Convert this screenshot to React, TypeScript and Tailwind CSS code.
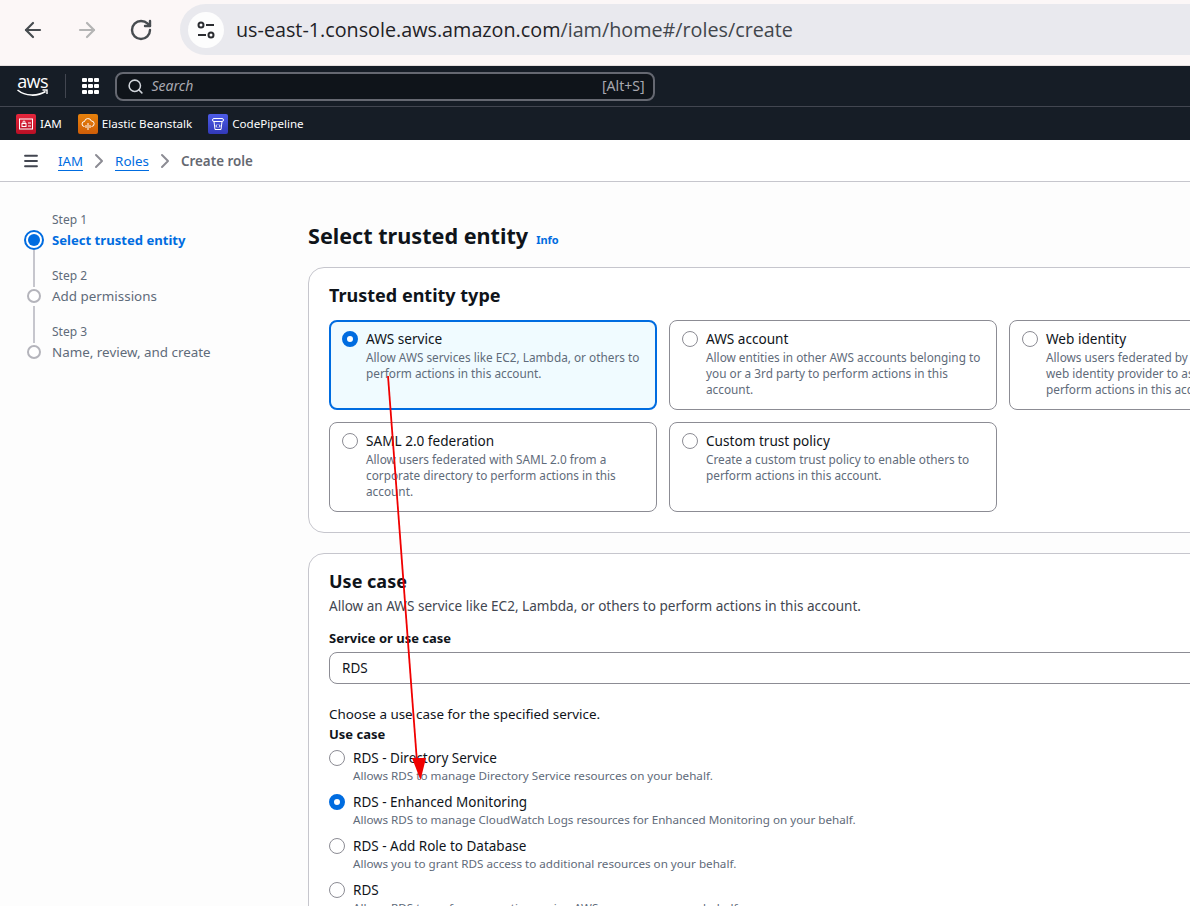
import React from 'react';
import { ArrowLeft, ArrowRight, RotateCw, Search, ChevronRight, Menu } from 'lucide-react';

const FONT = "font-['Noto_Sans','Open_Sans',sans-serif]";

const Radio: React.FC<{ checked?: boolean }> = ({ checked }) =>
  checked ? (
    <span className="block w-4 h-4 rounded-full border-[5px] border-[#006ce0] bg-white shrink-0" />
  ) : (
    <span className="block w-4 h-4 rounded-full border-[1.5px] border-[#8c8c94] bg-white shrink-0" />
  );

const Tile: React.FC<{ title: string; lines: string[]; checked?: boolean }> = ({ title, lines, checked }) => (
  <div
    className={
      checked
        ? 'w-[328px] h-[90px] rounded-lg border-2 border-[#006ce0] bg-[#f0fbff] pl-[11px] pt-[8px] flex gap-2'
        : 'w-[328px] h-[90px] rounded-lg border border-[#8c8c94] bg-white pl-[12px] pt-[9px] flex gap-2'
    }
  >
    <div className="pt-px">
      <Radio checked={checked} />
    </div>
    <div>
      <div className="text-[13.6px] leading-[18px] text-[#0f141a]">{title}</div>
      <div className="mt-px text-[11.8px] leading-4 text-[#5f6b7a] whitespace-nowrap">
        {lines.map(line => (
          <div key={line}>{line}</div>
        ))}
      </div>
    </div>
  </div>
);

const Step: React.FC<{ step: string; label: string; active?: boolean; line?: boolean }> = ({ step, label, active, line }) => (
  <div className="relative h-[56px] pl-[52px]">
    <div className="text-xs leading-4 text-[#5f6b7a] pt-[3px]">{step}</div>
    <div className={active ? 'text-[13.1px] leading-5 mt-[2px] font-bold text-[#006ce0]' : 'text-[13.4px] leading-5 mt-[2px] text-[#5f6b7a]'}>{label}</div>
    {active ? (
      <span className="absolute left-[24px] top-[21px] w-5 h-5 rounded-full border-2 border-[#006ce0] flex items-center justify-center bg-white">
        <span className="w-3 h-3 rounded-full bg-[#006ce0]" />
      </span>
    ) : (
      <span className="absolute left-[27px] top-[24px] w-[14px] h-[14px] rounded-full border-2 border-[#b4b4bb] bg-white" />
    )}
    {line && <span className="absolute left-[33px] top-[41px] w-[2px] h-[37px] bg-[#c6c6cd]" />}
  </div>
);

const UseCase: React.FC<{ title: string; desc: string; checked?: boolean }> = ({ title, desc, checked }) => (
  <div className="h-[44px] flex gap-2">
    <div className="pt-[2px]">
      <Radio checked={checked} />
    </div>
    <div className="whitespace-nowrap">
      <div className="text-[13.5px] leading-5 text-[#0f141a]">{title}</div>
      <div className="text-[11.66px] leading-4 text-[#5f6b7a]">{desc}</div>
    </div>
  </div>
);

const ServiceLink: React.FC<{ label: string; bg: string; children: React.ReactNode }> = ({ label, bg, children }) => (
  <div className="flex items-center gap-1">
    <span className={`w-5 h-5 rounded-[2px] flex items-center justify-center ${bg}`}>{children}</span>
    <span className="text-[11.6px] text-white">{label}</span>
  </div>
);

export default function App() {
  return (
    <div className={`${FONT} relative w-[1190px] h-[906px] overflow-hidden bg-[#fdfdfd]`}>
      {/* browser chrome */}
      <div className="h-[66px] bg-[#fcf7f7] border-b border-[#e6e0e0] flex items-start">
        <div className="flex items-center pl-[21px] pt-[18px] gap-[30px] w-[180px] text-[#474c50]">
          <ArrowLeft className="w-6 h-6" strokeWidth={2.2} />
          <ArrowRight className="w-6 h-6 text-[#b4b4b4]" strokeWidth={2.2} />
          <RotateCw className="w-6 h-6" strokeWidth={2.4} />
        </div>
        <div className="mt-[4px] h-[51px] flex-1 rounded-l-[26px] bg-[#e9e9ee] flex items-center pl-[8px]">
          <span className="w-9 h-9 rounded-full bg-[#fdfdfd] flex items-center justify-center">
            <svg width="20" height="20" viewBox="0 0 20 20" fill="none" stroke="#2a2c30" strokeWidth="2">
              <circle cx="5" cy="5" r="2.5" />
              <path d="M10 5h8" />
              <path d="M2 15h8" />
              <circle cx="15" cy="15" r="2.5" />
            </svg>
          </span>
          <span className="ml-[12px] text-[19.75px] text-[#42464c] font-['Open_Sans',sans-serif]">
            <span className="text-[#1f2226]">us-east-1.console.aws.amazon.com</span>/iam/home#/roles/create
          </span>
        </div>
      </div>

      {/* aws nav */}
      <div className="h-[41px] bg-[#161d26] border-b border-[#424650] flex items-center pl-[17px]">
        <div className="w-[31px] flex flex-col items-center">
          <span className="text-white text-[18px] leading-[12px] tracking-[-0.6px] font-['Open_Sans',sans-serif]">aws</span>
          <svg width="31" height="8" viewBox="0 0 31 8" fill="none" className="mt-[2px]">
            <path d="M0.5 1c8 6.500 20 6.500 28 1.500" stroke="#fff" strokeWidth="1.6" />
            <path d="M25.5 1h4.500v4" stroke="#fff" strokeWidth="1.4" />
          </svg>
        </div>
        <span className="ml-[17px] w-px h-6 bg-[#424650]" />
        <div className="ml-[16px] grid grid-cols-3 gap-[1.5px]">
          {[...Array(9)].map((_, i) => (
            <span key={i} className="w-[4.5px] h-[4.5px] bg-white rounded-[1px]" />
          ))}
        </div>
        <div className="ml-[16px] h-[29px] w-[540px] rounded-lg border-2 border-[#656871] bg-[#0f141a] flex items-center pl-[10px] pr-[8px]">
          <Search className="w-[17px] h-[17px] text-[#d1d5db]" strokeWidth={2.2} />
          <span className="ml-[8px] text-sm italic text-[#a8a8b0]">Search</span>
          <span className="ml-auto text-sm text-[#a8a8b0]">[Alt+S]</span>
        </div>
      </div>
      <div className="h-[33px] bg-[#161d26] flex items-center pl-[16px] gap-[16px]">
        <ServiceLink label="IAM" bg="bg-gradient-to-b from-[#e6263c] to-[#b80f25]">
          <svg width="14" height="12" viewBox="0 0 14 12" fill="none" stroke="#fff" strokeWidth="1">
            <rect x="0.5" y="1" width="13" height="10" />
            <rect x="3" y="5.5" width="4" height="3" />
            <path d="M4 5.5V4a1 1 0 0 1 2 0v1.500M9 5h3M9 8h3" />
          </svg>
        </ServiceLink>
        <ServiceLink label="Elastic Beanstalk" bg="bg-gradient-to-b from-[#e8820c] to-[#cf5e08]">
          <svg width="14" height="14" viewBox="0 0 14 14" fill="none" stroke="#fff" strokeWidth="1">
            <path d="M3.5 9.5a2.500 2.500 0 0 1 0-5 3.500 3.500 0 0 1 6.800-.5 2.700 2.700 0 0 1 .2 5.500" />
            <path d="M7 6v7M5 8v3M9 8v3" />
          </svg>
        </ServiceLink>
        <ServiceLink label="CodePipeline" bg="bg-gradient-to-b from-[#4d5ce8] to-[#3239b8]">
          <svg width="14" height="14" viewBox="0 0 14 14" fill="none" stroke="#fff" strokeWidth="1">
            <rect x="1.5" y="1.5" width="11" height="3" rx="1.5" />
            <path d="M3 4.500l1 8h6l1-8M6 7.500l-1.200 1.500 1.200 1.500M8 7.500l1.200 1.500-1.200 1.500" />
          </svg>
        </ServiceLink>
      </div>

      {/* breadcrumbs */}
      <div className="h-[42px] bg-white border-b border-[#c6c6cd] flex items-center pl-[22px]">
        <Menu className="w-[18px] h-[18px] text-[#424650]" strokeWidth={2.4} />
        <span className="ml-[18px] mt-[2px] text-[13.3px] leading-[17px] text-[#006ce0] border-b border-[#006ce0]">IAM</span>
        <ChevronRight className="mx-[4px] w-6 h-6 text-[#8c8c94]" strokeWidth={2} />
        <span className="mt-[2px] text-[13.4px] leading-[17px] text-[#006ce0] border-b border-[#006ce0]">Roles</span>
        <ChevronRight className="mx-[4px] w-6 h-6 text-[#8c8c94]" strokeWidth={2} />
        <span className="mt-[1px] text-[13.4px] font-semibold text-[#656871]">Create role</span>
      </div>

      <div className="flex">
        {/* wizard steps */}
        <div className="w-[308px] shrink-0 pt-[27px]">
          <Step step="Step 1" label="Select trusted entity" active line />
          <Step step="Step 2" label="Add permissions" line />
          <Step step="Step 3" label="Name, review, and create" />
        </div>

        <div className="flex-1 min-w-0">
          <div className="h-[85px] pt-[39px] flex items-baseline gap-2">
            <h1 className="text-[21.6px] leading-[30px] font-bold text-[#0f141a]">Select trusted entity</h1>
            <span className="text-[11px] font-bold text-[#006ce0]">Info</span>
          </div>

          <div className="w-[1100px] h-[266px] rounded-2xl border border-[#c6c6cd] bg-white pl-[20px] pt-[13px]">
            <h2 className="text-lg leading-7 font-bold text-[#0f141a] mb-[11px]">Trusted entity type</h2>
            <div className="grid grid-cols-[328px_328px_328px] gap-x-3 gap-y-3">
              <Tile checked title="AWS service" lines={['Allow AWS services like EC2, Lambda, or others to', 'perform actions in this account.']} />
              <Tile title="AWS account" lines={['Allow entities in other AWS accounts belonging to', 'you or a 3rd party to perform actions in this', 'account.']} />
              <Tile title="Web identity" lines={['Allows users federated by the specified external', 'web identity provider to assume this role to', 'perform actions in this account.']} />
              <Tile title="SAML 2.0 federation" lines={['Allow users federated with SAML 2.0 from a', 'corporate directory to perform actions in this', 'account.']} />
              <Tile title="Custom trust policy" lines={['Create a custom trust policy to enable others to', 'perform actions in this account.']} />
            </div>
          </div>

          <div className="mt-[20px] w-[1100px] h-[400px] rounded-2xl border border-[#c6c6cd] bg-white pl-[20px] pt-[13px]">
            <h2 className="text-lg leading-7 font-bold text-[#0f141a]">Use case</h2>
            <p className="mt-px text-[13.55px] leading-5 text-[#424650]">Allow an AWS service like EC2, Lambda, or others to perform actions in this account.</p>
            <div className="mt-[12px] text-[13px] leading-5 font-bold text-[#0f141a]">Service or use case</div>
            <div className="mt-[4px] h-[32px] w-[1000px] rounded-lg border border-[#8c8c94] flex items-center pl-[12px] text-[13.5px] text-[#0f141a]">RDS</div>
            <div className="mt-[20px] text-[13.4px] leading-5 text-[#0f141a]">Choose a use case for the specified service.</div>
            <div className="text-[13px] leading-5 font-bold text-[#0f141a] mb-[4px]">Use case</div>
            <UseCase title="RDS - Directory Service" desc="Allows RDS to manage Directory Service resources on your behalf." />
            <UseCase checked title="RDS - Enhanced Monitoring" desc="Allows RDS to manage CloudWatch Logs resources for Enhanced Monitoring on your behalf." />
            <UseCase title="RDS - Add Role to Database" desc="Allows you to grant RDS access to additional resources on your behalf." />
            <UseCase title="RDS" desc="Allows RDS to perform operations using AWS resources on your behalf." />
          </div>
        </div>
      </div>

      {/* annotation arrow drawn over the screenshot */}
      <svg className="absolute left-0 top-0 pointer-events-none" width="1190" height="906" fill="none">
        <path d="M388 376L417 762" stroke="#f00000" strokeWidth="1.8" />
        <path d="M412 758L426 758L420.5 780Z" fill="#f00000" />
      </svg>
    </div>
  );
}
